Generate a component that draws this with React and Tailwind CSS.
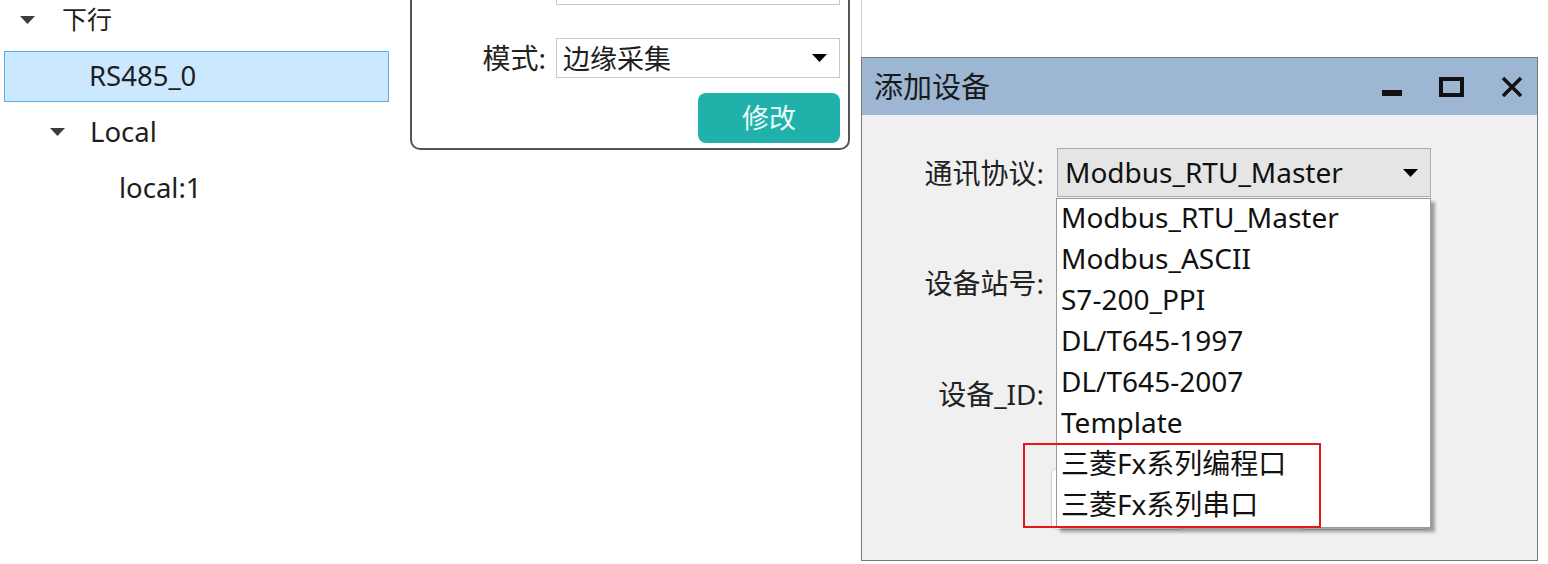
import React from 'react';

const font = "font-['Noto_Sans','Noto_Sans_CJK_SC',sans-serif]";

function Caret({ className = '' }) {
    return (
        <svg className={className} width="15" height="8" viewBox="0 0 15 8">
            <path d="M0 0h15L7.5 8z" fill="currentColor" />
        </svg>
    );
}

function TreeRow({ indent, caret, selected, latin, children }) {
    return (
        <div className="h-[56px] flex items-center py-[2px]">
            <div className={`h-[51px] w-[385px] ml-[4px] flex items-center border ${selected ? 'bg-[#cce8ff] border-[#5aaeea]' : 'border-transparent'}`}>
                <div className="flex items-center" style={{ paddingLeft: indent }}>
                    <div className="w-[42px] flex justify-start">
                        {caret && <Caret className="text-[#3c3c3c]" />}
                    </div>
                    <span className={`${latin ? 'text-[27.5px] -ml-[2px]' : 'text-[25px]'} text-[#1e1e1e]`}>{children}</span>
                </div>
            </div>
        </div>
    );
}

const items = [
    'Modbus_RTU_Master',
    'Modbus_ASCII',
    'S7-200_PPI',
    'DL/T645-1997',
    'DL/T645-2007',
    'Template',
    '三菱Fx系列编程口',
    '三菱Fx系列串口',
];

export default function App() {
    return (
        <div className={`${font} w-[1548px] h-[564px] bg-white overflow-hidden flex items-start`}>
            {/* tree */}
            <div className="w-[410px] shrink-0 -mt-[8px]">
                <TreeRow indent={15} caret>下行</TreeRow>
                <TreeRow indent={44} selected latin>RS485_0</TreeRow>
                <TreeRow indent={45} caret latin>Local</TreeRow>
                <TreeRow indent={74} latin>local:1</TreeRow>
            </div>

            {/* settings panel */}
            <div className="w-[440px] shrink-0 h-[150px] border-x-2 border-b-2 border-[#555] rounded-b-[10px] flex flex-col">
                <div className="flex justify-end pr-[8px]">
                    <div className="w-[284px] h-[40px] -mt-[35px] border border-[#c8c8c8] bg-white" />
                </div>
                <div className="flex items-center justify-end pr-[8px] mt-[33px]">
                    <span className="text-[28px] leading-none text-[#222] mr-[10px]">模式:</span>
                    <div className="w-[284px] h-[40px] border border-[#c8c8c8] bg-white flex items-center justify-between pl-[6px] pr-[12px]">
                        <span className="text-[27px] leading-none text-[#1e1e1e]">边缘采集</span>
                        <Caret className="text-black" />
                    </div>
                </div>
                <div className="flex justify-end pr-[8px] mt-[15px]">
                    <button className="w-[142px] h-[50px] rounded-[8px] bg-[#20b2aa] text-[27px] text-[#eafaf8]">修改</button>
                </div>
            </div>

            <div className="w-[12px] shrink-0 h-[57px] border-r border-[#cfcfcf] -mr-[1px]" />

            {/* dialog */}
            <div className="mt-[57px] w-[677px] shrink-0 h-[504px] border border-[#777] bg-[#f0f0f0] relative flex flex-col">
                <div className="h-[57px] bg-[#9cb6d4] flex items-center pl-[12px] pr-[14px]">
                    <span className="text-[29px] text-[#1a1a1a] flex-1">添加设备</span>
                    <svg width="20" height="8" viewBox="0 0 20 8" className="mt-[14px]">
                        <rect x="0" y="0" width="20" height="6" fill="#111" />
                    </svg>
                    <svg width="25" height="20" viewBox="0 0 25 20" className="ml-[37px]">
                        <rect x="2" y="2" width="21" height="16" fill="none" stroke="#111" strokeWidth="4" />
                    </svg>
                    <svg width="22" height="22" viewBox="0 0 22 22" className="ml-[37px]">
                        <path d="M2 2l18 18M20 2L2 20" stroke="#111" strokeWidth="3.5" />
                    </svg>
                </div>

                <div className="flex flex-col pt-[33px]">
                    <div className="flex items-center">
                        <span className="w-[182px] text-right text-[28px] text-[#222]">通讯协议:</span>
                        <div className="ml-[13px] w-[374px] h-[49px] border border-[#adadad] bg-[#e5e5e5] flex items-center justify-between pl-[7px] pr-[12px]">
                            <span className="text-[28px] text-[#111] -mt-[2px]">Modbus_RTU_Master</span>
                            <Caret className="text-black" />
                        </div>
                    </div>
                    <div className="flex items-center mt-[62px]">
                        <span className="w-[182px] text-right text-[28px] text-[#222]">设备站号:</span>
                        <div className="ml-[13px] w-[374px] h-[48px] border border-[#adadad] bg-white" />
                    </div>
                    <div className="flex items-center mt-[63px]">
                        <span className="w-[182px] text-right text-[28px] text-[#222]">设备_ID:</span>
                        <div className="ml-[13px] w-[374px] h-[48px] border border-[#adadad] bg-white" />
                    </div>
                    <div className="flex mt-[50px] pl-[189px] gap-[112px]">
                        <div className="w-[135px] h-[62px] rounded-[6px] border border-[#cfcfcf] bg-[#fdfdfd]" />
                        <div className="w-[133px] h-[62px] rounded-[6px] border border-[#cfcfcf] bg-[#fdfdfd]" />
                    </div>
                </div>

                {/* open dropdown */}
                <div className="absolute left-[194px] top-[140px] w-[375px] bg-white border border-[#9a9a9a] shadow-[4px_4px_3px_rgba(0,0,0,0.35)] flex flex-col">
                    {items.map((t) => (
                        <div key={t} className="h-[41px] flex items-center pl-[4px] pb-[6px] text-[28px] text-[#111] leading-none">
                            {t}
                        </div>
                    ))}
                </div>

                {/* highlight */}
                <div className="absolute left-[161px] top-[385px] w-[298px] h-[85px] border-2 border-[#e4161b]" />
            </div>
        </div>
    );
}
